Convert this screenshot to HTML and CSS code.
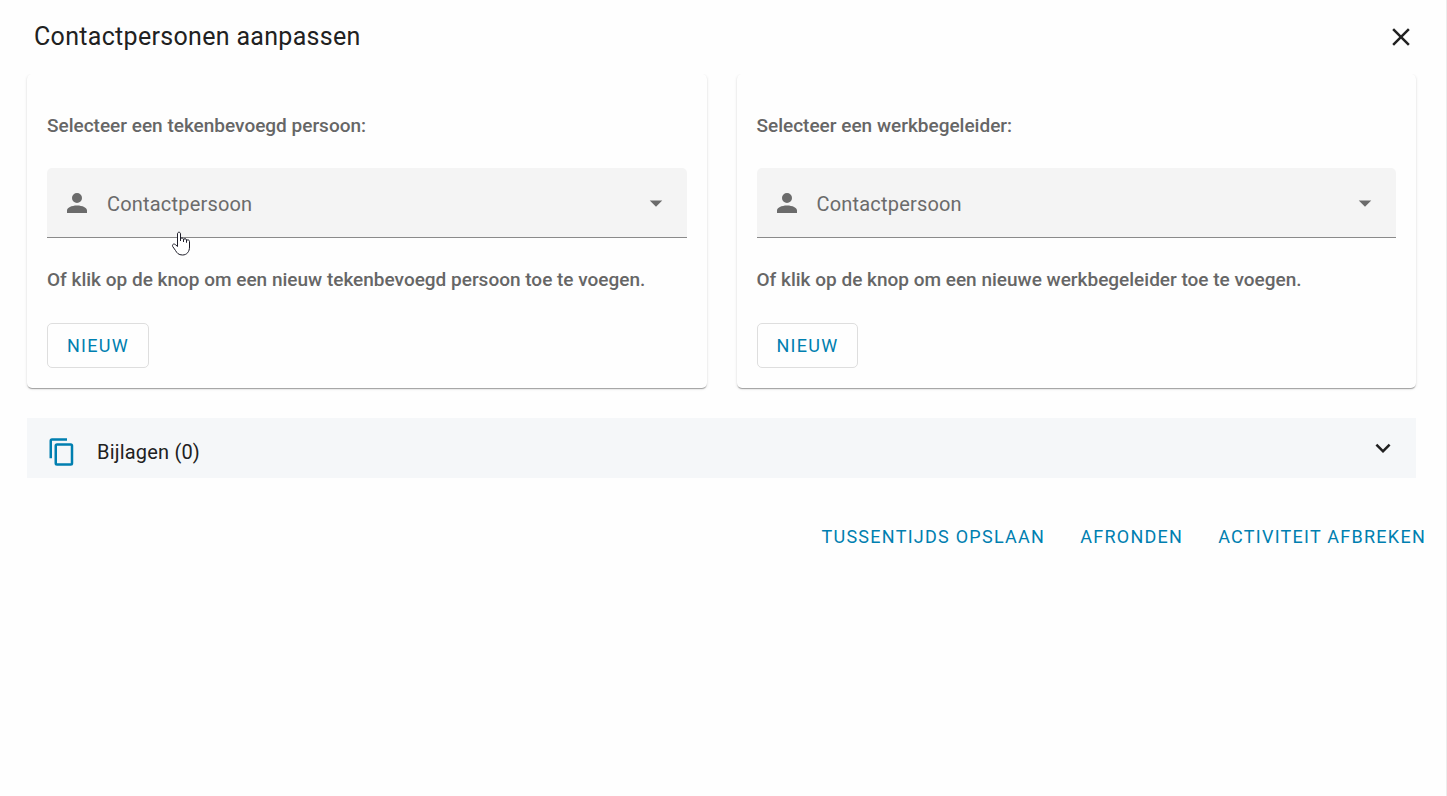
FILE: index.html
```html
<!DOCTYPE html>
<html lang="nl">
  <head>
    <meta charset="utf-8">
    <title>Contactpersonen aanpassen</title>
    <link rel="stylesheet" href="styles.css">
  </head>

<body>
  <header class="toolbar">
    <h1 class="toolbar-title">Contactpersonen aanpassen</h1>
    <button class="icon-btn" type="button" aria-label="Sluiten">
      <svg width="30" height="30" viewBox="0 0 24 24"><path d="M19 6.41L17.59 5 12 10.59 6.41 5 5 6.41 10.59 12 5 17.59 6.41 19 12 13.41 17.59 19 19 17.59 13.41 12z"/></svg>
    </button>
  </header>

  <main class="content">
    <div class="cards">
      <section class="card">
        <label class="card-text" for="signer">Selecteer een tekenbevoegd persoon:</label>
        <div class="field">
          <svg class="field-icon" width="30" height="30" viewBox="0 0 24 24"><path d="M12 4a4 4 0 1 1 0 8 4 4 0 0 1 0-8m0 10c4.42 0 8 1.79 8 4v2H4v-2c0-2.21 3.58-4 8-4z"/></svg>
          <select id="signer" class="select"><option>Contactpersoon</option></select>
          <svg class="field-arrow" width="30" height="30" viewBox="0 0 24 24"><path d="M7 10l5 5 5-5z"/></svg>
          <!-- hand pointer -->
          <svg class="pointer" width="20" height="26" viewBox="0 0 20 26"><path d="M6.500 15.500V3C6.500 .6 9.500 .6 9.500 3v7V8.500C9.500 6.500 12.500 6.500 12.500 8.500V11 9C12.500 7.200 15.500 7.200 15.500 9v2.500-1.500C15.500 8.400 18.500 8.400 18.500 10.500V16c0 4.500-2.500 8-7 8-4 0-5.500-2-7-4.500L1.700 15.500C.8 13.300 3 12.300 4.500 13.700z"/></svg>
        </div>
        <p class="card-text">Of klik op de knop om een nieuw tekenbevoegd persoon toe te voegen.</p>
        <button class="btn btn-outlined" type="button">NIEUW</button>
      </section>

      <section class="card">
        <label class="card-text" for="mentor">Selecteer een werkbegeleider:</label>
        <div class="field">
          <svg class="field-icon" width="30" height="30" viewBox="0 0 24 24"><path d="M12 4a4 4 0 1 1 0 8 4 4 0 0 1 0-8m0 10c4.42 0 8 1.79 8 4v2H4v-2c0-2.21 3.58-4 8-4z"/></svg>
          <select id="mentor" class="select"><option>Contactpersoon</option></select>
          <svg class="field-arrow" width="30" height="30" viewBox="0 0 24 24"><path d="M7 10l5 5 5-5z"/></svg>
        </div>
        <p class="card-text">Of klik op de knop om een nieuwe werkbegeleider toe te voegen.</p>
        <button class="btn btn-outlined" type="button">NIEUW</button>
      </section>
    </div>

    <button class="panel" type="button" aria-expanded="false">
      <svg class="panel-icon" width="30" height="30" viewBox="0 0 24 24"><path d="M19 21H8V7h11m0-2H8a2 2 0 0 0-2 2v14a2 2 0 0 0 2 2h11a2 2 0 0 0 2-2V7a2 2 0 0 0-2-2m-3-4H4a2 2 0 0 0-2 2v14h2V3h12z"/></svg>
      <span class="panel-title">Bijlagen (0)</span>
      <svg class="panel-chevron" width="30" height="30" viewBox="0 0 24 24"><path d="M7.410 8.580L12 13.170l4.590-4.590L18 10l-6 6-6-6z"/></svg>
    </button>
  </main>

  <footer class="actions">
    <button class="btn" type="button">TUSSENTIJDS OPSLAAN</button>
    <button class="btn" type="button">AFRONDEN</button>
    <button class="btn" type="button">ACTIVITEIT AFBREKEN</button>
  </footer>
</body>
</html>
```

FILE: styles.css
```css
* { box-sizing: border-box; }

body {
  margin: 0;
  min-height: 100vh;
  border-right: 1px solid #ececec;
  background: #fefefe;
  color: #212121;
  font-family: Roboto, sans-serif;
  font-size: 20px;
}

button {
  border: 0;
  background: none;
  font-family: inherit;
  cursor: pointer;
}

svg {
  display: block;
  fill: currentColor;
}

.toolbar {
  position: relative;
  z-index: 1;
  display: flex;
  align-items: center;
  justify-content: space-between;
  height: 74px;
  padding: 0 30px 0 34px;
  background: #fefefe;
}

.toolbar-title {
  margin: 0;
  font-size: 25px;
  font-weight: 400;
  line-height: 30px;
  letter-spacing: .0125em;
}

.icon-btn {
  padding: 0;
  color: #212121;
}

.content { padding: 0 30px 0 27px; }

.cards {
  display: flex;
  gap: 30px;
}

.card {
  flex: 1;
  padding: 40px 20px 20px;
  border-radius: 5px;
  background: #fefefe;
  box-shadow: 0 2px 1px -1px rgba(0,0,0,.2), 0 1px 1px rgba(0,0,0,.14), 0 1px 3px rgba(0,0,0,.12);
}

.card-text {
  display: block;
  margin: 0;
  color: #666;
  font-size: 19px;
  font-weight: 500;
  line-height: 24px;
}

.field {
  position: relative;
  margin: 30px 0;
  color: #6b6b6b;
}

.select {
  display: block;
  width: 100%;
  height: 70px;
  padding: 2px 60px 0;
  border: 0;
  border-bottom: 1px solid #8a8a8a;
  border-radius: 5px 5px 0 0;
  background: #f4f4f4;
  color: #6b6b6b;
  font-family: inherit;
  font-size: 20px;
  letter-spacing: .0094em;
  appearance: none;
}

.field-icon,
.field-arrow {
  position: absolute;
  top: 20px;
  pointer-events: none;
}

.field-icon { left: 15px; }
.field-arrow { right: 16px; }

.pointer {
  position: absolute;
  left: 124px;
  top: 63px;
  fill: #fff;
  stroke: #1c1c28;
  pointer-events: none;
}

.btn {
  height: 45px;
  padding: 0 10px;
  color: #007fb0;
  font-size: 18px;
  letter-spacing: .07em;
}

.btn-outlined {
  margin-top: 31px;
  padding: 0 19px;
  border: 1px solid #dedede;
  border-radius: 5px;
}

.panel {
  display: flex;
  align-items: center;
  gap: 20px;
  width: 100%;
  height: 60px;
  margin-top: 30px;
  padding: 8px 18px 0 20px;
  background: #f5f7f9;
  color: #212121;
  font-size: 20px;
  letter-spacing: .0094em;
  text-align: left;
}

.panel-icon { color: #007fb0; }

.panel-title { flex: 1; }

.panel-chevron { margin-bottom: 8px; }

.actions {
  display: flex;
  justify-content: flex-end;
  gap: 15px;
  padding: 36px 10px 0;
}
```
